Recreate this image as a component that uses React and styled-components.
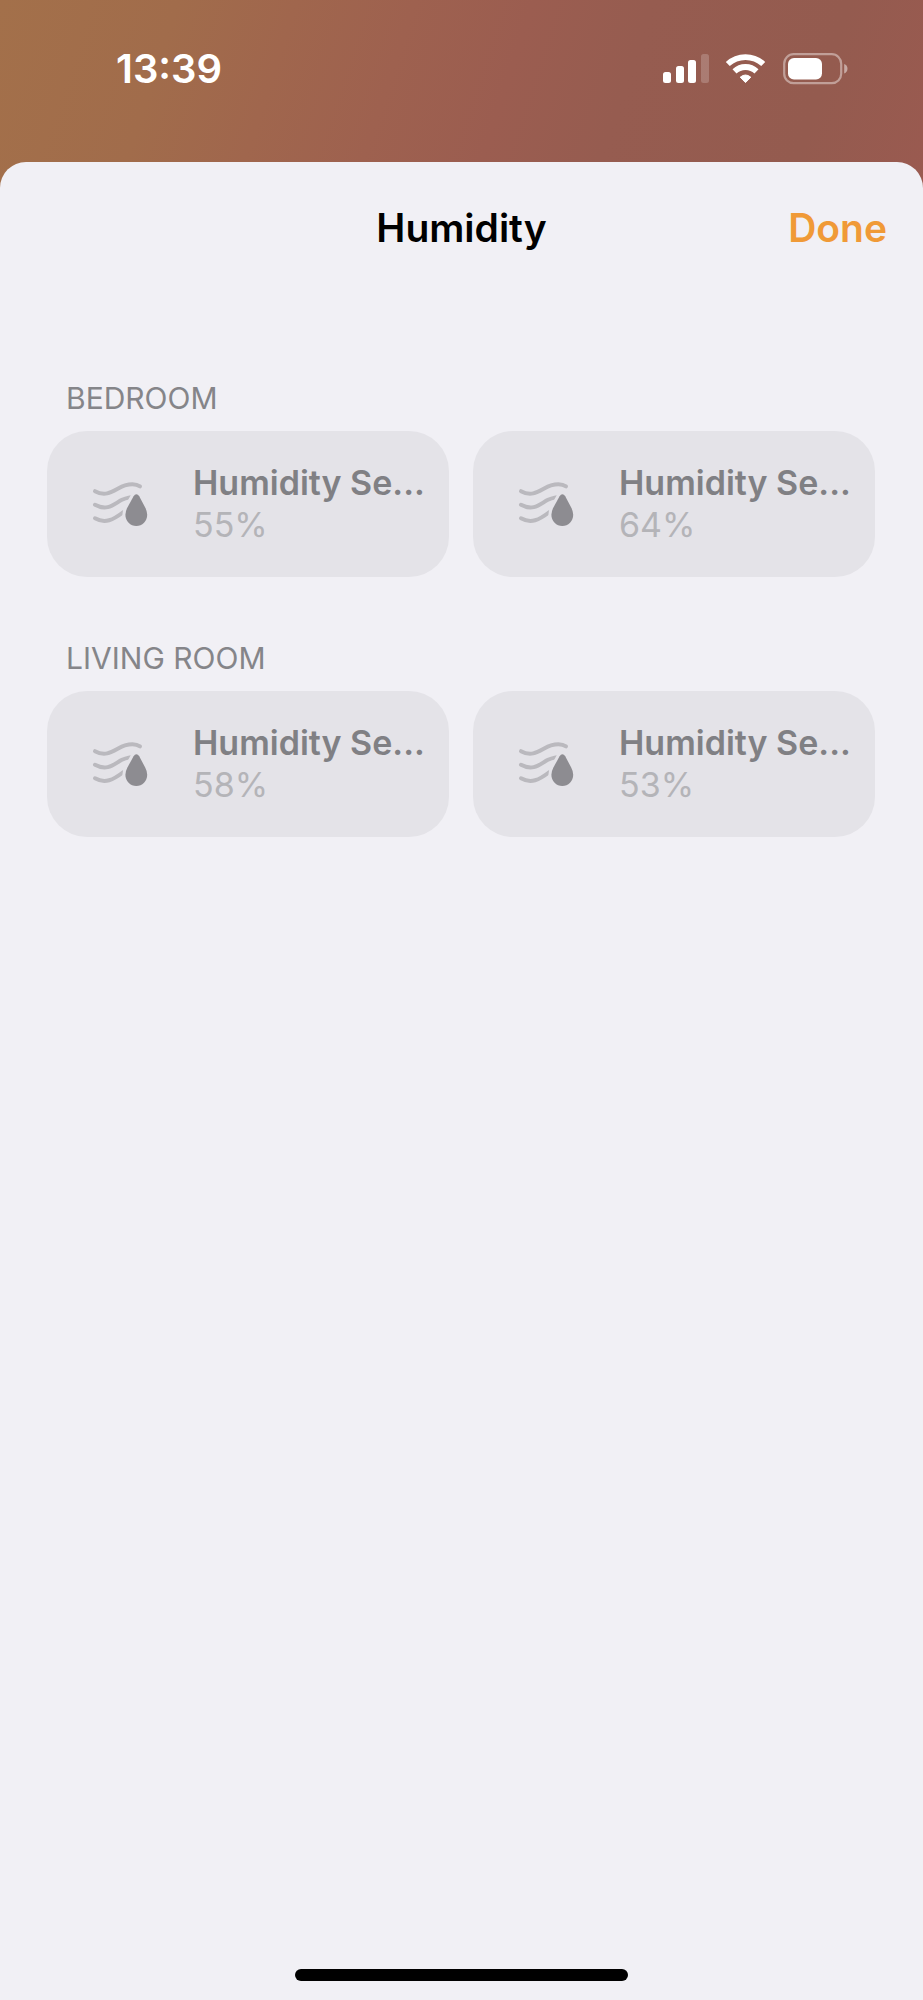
import React from 'react';
import styled, { createGlobalStyle } from 'styled-components';

const GlobalStyle = createGlobalStyle`
  *, *::before, *::after { box-sizing: border-box; }
  body {
    margin: 0;
    font-family: Inter, "Liberation Sans", sans-serif;
    background: #f1f0f5;
  }
`;

const Screen = styled.div`
  display: flex;
  flex-direction: column;
  min-height: 100vh;
  background: linear-gradient(108deg, #a3704a 0, #a16c4b 18%, #a0664d 30%, #9e614f 42%, #9b5d50 54%, #965c50 66%, #945b4f 86%, #9a5a50 100%) 0 0 / 100% 200px no-repeat;
`;

const StatusBar = styled.div`
  display: flex;
  justify-content: space-between;
  align-items: flex-start;
  height: 162px;
  padding: 45px 74px 0 116px;
  color: #fff;
`;

const Clock = styled.time`
  font-size: 40px;
  line-height: 48px;
  font-weight: 600;
`;

const StatusIcons = styled.div`
  display: flex;
  align-items: center;
  gap: 16px;
  height: 48px;

  svg { display: block; }
`;

const Sheet = styled.main`
  display: flex;
  flex: 1;
  flex-direction: column;
  background: #f1f0f5;
  border-radius: 26px 26px 0 0;
`;

const SheetHeader = styled.header`
  display: grid;
  grid-template-columns: 1fr auto 1fr;
  align-items: center;
  height: 132px;
  padding: 0 36px;
`;

const Title = styled.h1`
  grid-column: 2;
  margin: 0;
  font-size: 39px;
  line-height: 48px;
  font-weight: 600;
  color: #000;
`;

const DoneButton = styled.button`
  justify-self: end;
  padding: 0;
  border: 0;
  background: none;
  font: inherit;
  font-size: 39px;
  line-height: 48px;
  font-weight: 600;
  color: #f09a37;
  cursor: pointer;
`;

const Rooms = styled.div`
  display: flex;
  flex: 1;
  flex-direction: column;
  gap: 61px;
  padding: 84px 48px 60px 47px;
`;

const RoomName = styled.h2`
  margin: 0 0 13px;
  padding-left: 19px;
  font-size: 30px;
  line-height: 40px;
  font-weight: 400;
  text-transform: uppercase;
  color: #858589;
`;

const SensorGrid = styled.div`
  display: grid;
  grid-template-columns: repeat(2, minmax(0, 1fr));
  gap: 24px;
`;

const SensorCard = styled.article`
  display: flex;
  align-items: center;
  gap: 44px;
  height: 146px;
  padding: 0 20px 0 44px;
  border-radius: 40px;
  background: #e4e3e8;

  svg { flex: none; display: block; }
`;

const SensorText = styled.div`
  flex: 1;
  min-width: 0;
`;

const SensorName = styled.h3`
  margin: 0;
  font-size: 34px;
  line-height: 42px;
  font-weight: 600;
  color: #808084;
  white-space: nowrap;
`;

const SensorValue = styled.p`
  margin: 0;
  font-size: 34px;
  line-height: 42px;
  color: #b4b4b8;
`;

const HomeIndicator = styled.div`
  align-self: center;
  width: 36%;
  height: 12px;
  margin-bottom: 19px;
  border-radius: 6px;
  background: #000;
`;

const SignalIcon = () => (
  <svg width="46" height="30" viewBox="0 0 46 30" fill="#fff" role="img" aria-label="Signal">
    <rect x="0" y="18" width="8" height="11" rx="2.5" />
    <rect x="13" y="12" width="8" height="17" rx="2.5" />
    <rect x="25" y="6" width="8" height="23" rx="2.5" />
    <rect x="38" y="0" width="8" height="29" rx="2.5" opacity="0.2" />
  </svg>
);

const WifiIcon = () => (
  <svg width="42" height="30" viewBox="0 0 42 30" role="img" aria-label="Wi-Fi">
    <g fill="none" stroke="#fff" strokeWidth="5.8">
      <path d="M2.8 10A26 26 0 0 1 38.2 10" />
      <path d="M9.5 17.4A16 16 0 0 1 31.5 17.4" />
    </g>
    <path fill="#fff" stroke="#fff" strokeWidth="1" strokeLinejoin="round" d="M15.2 23.2Q20.5 18.8 25.8 23.2L20.5 28.6Z" />
  </svg>
);

const BatteryIcon = () => (
  <svg width="66" height="32" viewBox="0 0 66 32" role="img" aria-label="Battery">
    <rect x="1.2" y="1.2" width="57" height="29" rx="9.5" fill="none" stroke="#fff" strokeOpacity="0.42" strokeWidth="2.2" />
    <rect x="5" y="5" width="34" height="21.5" rx="6" fill="#fff" />
    <path d="M61.2 11Q64.5 12.3 64.5 15.7T61.2 20.4Z" fill="#fff" fillOpacity="0.48" />
  </svg>
);

const HumidityIcon = () => (
  <svg width="58" height="48" viewBox="0 0 58 48" aria-hidden="true">
    <g fill="none" stroke="#bab9be" strokeWidth="4" strokeLinecap="round">
      <path d="M4 11.2C17 18.5 25 8 34 5.4C40 3.7 46 4.3 49 6.4" />
      <path d="M4 24.8C17 32 24 23 31 19.8C35 18 36 18 39 17.4" />
      <path d="M4 38.3C14 44 22 40 32.5 32" />
    </g>
    <path
      d="M45.4 14.2Q47 14.2 48.2 16.3L54.2 27.5Q56.2 31.3 56.2 34.8A10.9 11.2 0 0 1 34.4 34.8Q34.4 31.3 36.4 27.5L42.6 16.3Q43.8 14.2 45.4 14.2Z"
      fill="#8d8c91"
      stroke="#e4e3e8"
      strokeWidth="6"
      paintOrder="stroke"
    />
  </svg>
);

const rooms = [
  { name: 'Bedroom', values: [55, 64] },
  { name: 'Living Room', values: [58, 53] },
];

export default function App() {
  return (
    <Screen>
      <GlobalStyle />
      <StatusBar>
        <Clock>13:39</Clock>
        <StatusIcons>
          <SignalIcon />
          <WifiIcon />
          <BatteryIcon />
        </StatusIcons>
      </StatusBar>
      <Sheet>
        <SheetHeader>
          <Title>Humidity</Title>
          <DoneButton type="button">Done</DoneButton>
        </SheetHeader>
        <Rooms>
          {rooms.map((room) => (
            <section key={room.name}>
              <RoomName>{room.name}</RoomName>
              <SensorGrid>
                {room.values.map((value) => (
                  <SensorCard key={value}>
                    <HumidityIcon />
                    <SensorText>
                      <SensorName>Humidity Se...</SensorName>
                      <SensorValue>{value}%</SensorValue>
                    </SensorText>
                  </SensorCard>
                ))}
              </SensorGrid>
            </section>
          ))}
        </Rooms>
        <HomeIndicator />
      </Sheet>
    </Screen>
  );
}
